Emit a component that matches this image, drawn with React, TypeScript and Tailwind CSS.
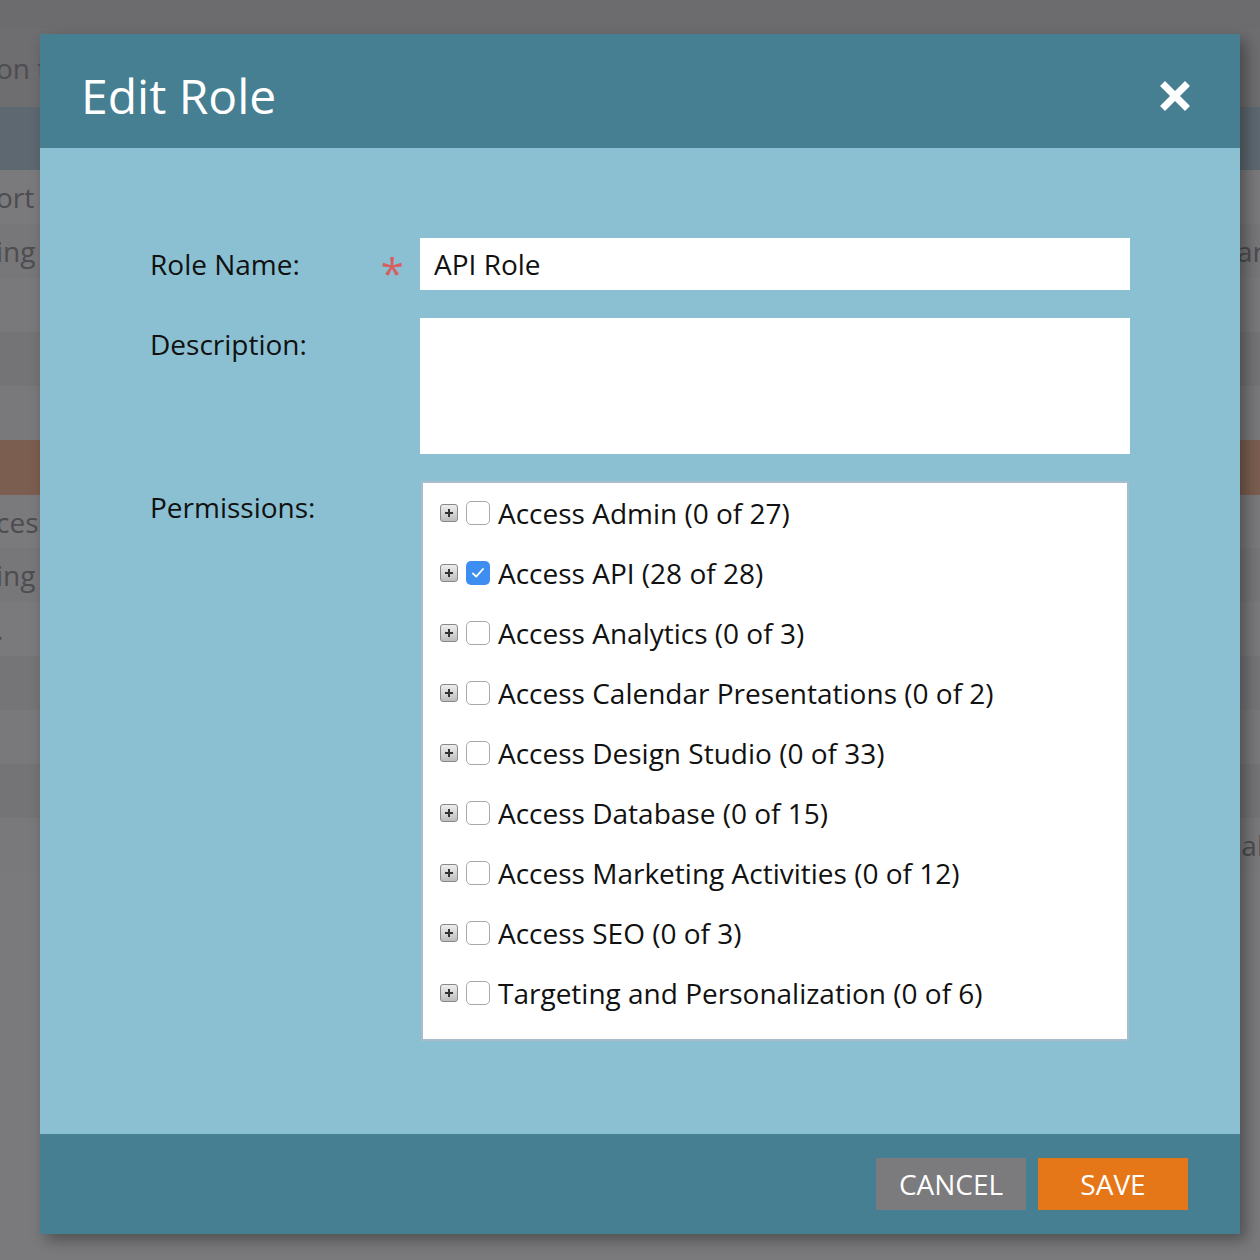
import React from "react";

const font = { fontFamily: '"Open Sans", "Noto Sans", sans-serif' };

const bgRows: { h: string; bg: string; left?: string; right?: string }[] = [
  { h: "h-[28px]", bg: "bg-[#6c6b6d]" },
  { h: "h-[79px]", bg: "bg-[#6e6d6f]", left: "on t" },
  { h: "h-[63px]", bg: "bg-[#5e6870]" },
  { h: "h-[54px]", bg: "bg-[#7a797b]", left: "ort" },
  { h: "h-[54px]", bg: "bg-[#777678]", left: "ing", right: "ar" },
  { h: "h-[54px]", bg: "bg-[#79787a]" },
  { h: "h-[54px]", bg: "bg-[#747375]" },
  { h: "h-[54px]", bg: "bg-[#79787a]" },
  { h: "h-[55px]", bg: "bg-[#7b5e50]" },
  { h: "h-[53px]", bg: "bg-[#7a797b]", left: "cess" },
  { h: "h-[54px]", bg: "bg-[#777678]", left: "ing" },
  { h: "h-[54px]", bg: "bg-[#7a797b]", left: "." },
  { h: "h-[54px]", bg: "bg-[#757476]" },
  { h: "h-[54px]", bg: "bg-[#79787a]" },
  { h: "h-[54px]", bg: "bg-[#747375]" },
  { h: "h-[54px]", bg: "bg-[#79787a]", right: "al" },
  { h: "h-[400px]", bg: "bg-[#7a797b]" },
];

const perms: { label: string; checked?: boolean }[] = [
  { label: "Access Admin (0 of 27)" },
  { label: "Access API (28 of 28)", checked: true },
  { label: "Access Analytics (0 of 3)" },
  { label: "Access Calendar Presentations (0 of 2)" },
  { label: "Access Design Studio (0 of 33)" },
  { label: "Access Database (0 of 15)" },
  { label: "Access Marketing Activities (0 of 12)" },
  { label: "Access SEO (0 of 3)" },
  { label: "Targeting and Personalization (0 of 6)" },
];

function ExpandIcon() {
  return (
    <div className="w-[18px] h-[18px] rounded-[3px] border border-[#888] bg-gradient-to-b from-[#eeeeee] to-[#bdbdbd] flex items-center justify-center shrink-0">
      <svg width="10" height="10" viewBox="0 0 10 10">
        <path d="M5 1v8M1 5h8" stroke="#333" strokeWidth="2" />
      </svg>
    </div>
  );
}

function Checkbox({ checked }: { checked?: boolean }) {
  if (checked) {
    return (
      <div className="w-[24px] h-[24px] rounded-[5px] bg-[#3d8ef0] flex items-center justify-center shrink-0">
        <svg width="18" height="18" viewBox="0 0 18 18">
          <path d="M4 9.5l3.2 3.2L14 5" stroke="#fff" strokeWidth="1.8" fill="none" strokeLinecap="round" strokeLinejoin="round" />
        </svg>
      </div>
    );
  }
  return <div className="w-[24px] h-[24px] rounded-[5px] border border-[#a9a9a9] bg-white shrink-0" />;
}

export default function App() {
  return (
    <div className="relative w-[1260px] h-[1260px] overflow-hidden" style={font}>
      {/* dimmed page behind */}
      <div className="flex flex-col w-full">
        {bgRows.map((r, i) => (
          <div key={i} className={`${r.h} ${r.bg} flex items-center justify-between text-[28px] text-[#4d4c50]`}>
            <span className="-ml-[4px]">{r.left ?? ""}</span>
            <span className="-mr-[4px]">{r.right ?? ""}</span>
          </div>
        ))}
      </div>

      {/* modal */}
      <div className="absolute left-[40px] top-[34px] w-[1200px] h-[1200px] flex flex-col shadow-[6px_6px_14px_rgba(0,0,0,0.35)]">
        <div className="h-[114px] bg-[#467f91] flex items-center justify-between pl-[41px] pr-[50px] pt-[10px] shrink-0">
          <h1 className="text-[48px] text-white leading-none">Edit Role</h1>
          <svg width="30" height="30" viewBox="0 0 30 30">
            <path d="M5 5L25 25M25 5L5 25" stroke="#fff" strokeWidth="7" strokeLinecap="square" />
          </svg>
        </div>

        <div className="flex-1 bg-[#8ac0d2] pt-[90px] pl-[110px] pr-[110px]">
          <div className="grid grid-cols-[270px_710px] gap-y-[28px] text-[28px] text-[#111]">
            <div className="h-[52px] flex items-center justify-between pr-[16px]">
              <span>Role Name:</span>
              <span className="text-[#d6605f] text-[42px] leading-none mt-[18px]">*</span>
            </div>
            <div className="h-[52px] bg-white flex items-center px-[14px]">
              <span>API Role</span>
            </div>

            <div className="h-[52px] flex items-center">
              <span>Description:</span>
            </div>
            <div className="h-[136px] bg-white" />

            <div className="h-[52px] flex items-center -mt-[1px]">
              <span>Permissions:</span>
            </div>
            <div className="bg-white border-2 border-[#a9bccb] pb-[16px] -mt-[1px] ml-[1px] w-[708px]">
              {perms.map((p) => (
                <div key={p.label} className="h-[60px] flex items-center pl-[17px]">
                  <ExpandIcon />
                  <div className="w-[8px]" />
                  <Checkbox checked={p.checked} />
                  <span className="ml-[8px] whitespace-nowrap">{p.label}</span>
                </div>
              ))}
            </div>
          </div>
        </div>

        <div className="h-[100px] bg-[#467f91] flex items-center justify-end pr-[52px] gap-[12px] shrink-0">
          <button className="w-[150px] h-[52px] bg-[#7b7a7c] text-white text-[28px] uppercase">Cancel</button>
          <button className="w-[150px] h-[52px] bg-[#e67718] text-white text-[28px] uppercase">Save</button>
        </div>
      </div>
    </div>
  );
}
